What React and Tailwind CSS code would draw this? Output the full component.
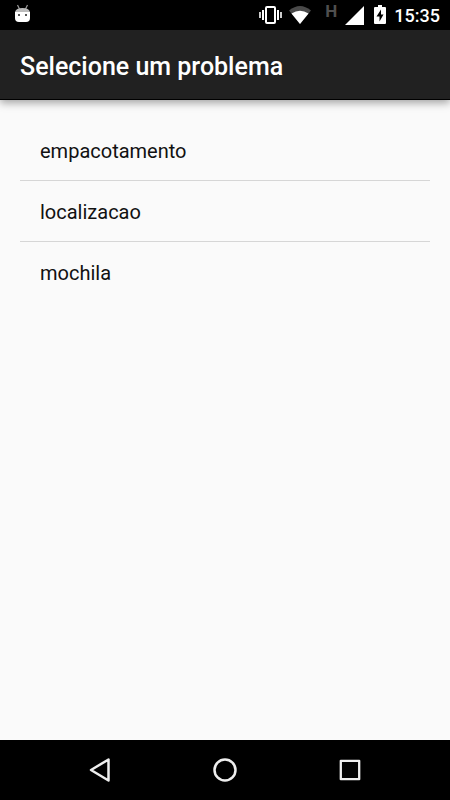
import { useState } from "react"

const problems = [ "empacotamento", "localizacao", "mochila" ]

function StatusBar() {
    return (
        <div className="flex h-[30px] items-center justify-between bg-black pl-[14px] pr-[10px] text-white">
            {/* debug robot */}
            <svg className="h-[30px] w-[17px]" viewBox="0 0 17 30">
                <path d="M3.5 5 5.5 9M13.5 5 11.500 9" stroke="#999" strokeWidth="1.2" />
                <path d="M1 12Q2 8 8.500 8Q15 8 16 12Z" fill="#bbb" />
                <path d="M1 12H16V18Q16 22 12 22H5Q1 22 1 18Z" fill="#fff" />
                <path d="M4 14h2v2H4zM11 14h2v2h-2z" fill="#555" />
            </svg>
            <div className="flex items-center gap-2">
                <div className="flex items-center gap-[6px]">
                    <svg className="h-[30px] w-[24px]" viewBox="0 0 24 30" fill="none" stroke="#fff">
                        <rect x="7" y="7" width="9" height="16" rx="1" strokeWidth="2" />
                        <path d="M4 10v10M19 10v10" strokeWidth="2" />
                        <path d="M1 12v6M22 12v6" strokeWidth="2" stroke="#ccc" />
                    </svg>
                    <svg className="h-[30px] w-[22px]" viewBox="0 0 22 30">
                        <path d="M0 10.500Q11 1.500 22 10.500L11 24Z" fill="#4a4a4a" />
                        <path d="M2.500 13.500Q11 8 19.500 13.500L11 24Z" fill="#fff" />
                    </svg>
                    <span className="h-[30px] w-[20px] text-right text-[17px] leading-[22px] font-bold text-[#4f4f4f]">H</span>
                </div>
                <svg className="h-[30px] w-[20px]" viewBox="0 0 20 30">
                    <path d="M0 25 19 6V25Z" fill="#fff" />
                </svg>
                <svg className="h-[30px] w-[13px]" viewBox="0 0 13 30">
                    <path d="M5 5H9V7H12Q13 7 13 8V23Q13 24 12 24H2Q1 24 1 23V8Q1 7 2 7H5Z" fill="#fff" />
                    <path d="M8 9.500 3.500 16.500H6.500V21.500L10.500 14.500H8Z" fill="#000" />
                </svg>
                <span className="pt-[2px] text-[18px] leading-[28px] font-medium">15:35</span>
            </div>
        </div>
    )
}

function NavBar() {
    return (
        <nav className="flex h-[60px] justify-center bg-black">
            <button aria-label="Voltar" className="flex w-[125px] items-center justify-center">
                <svg className="size-[30px]" viewBox="0 0 30 30" fill="none" stroke="#eee" strokeWidth="2.5" strokeLinejoin="round">
                    <path d="M6 15 23.500 4.500V25.500Z" />
                </svg>
            </button>
            <button aria-label="Início" className="flex w-[125px] items-center justify-center">
                <svg className="size-[30px]" viewBox="0 0 30 30" fill="none" stroke="#eee" strokeWidth="2.5">
                    <circle cx="15" cy="15" r="10.5" />
                </svg>
            </button>
            <button aria-label="Recentes" className="flex w-[125px] items-center justify-center">
                <svg className="size-[30px]" viewBox="0 0 30 30" fill="none" stroke="#eee" strokeWidth="2.3" strokeLinejoin="round">
                    <rect x="5.8" y="5.8" width="18.4" height="18.4" />
                </svg>
            </button>
        </nav>
    )
}

export default function App() {
    const [ selected, setSelected ] = useState(null)

    return (
        <div className="flex min-h-screen flex-col bg-[#fafafa] font-['Roboto',sans-serif]">
            <StatusBar />
            <header className="flex h-[70px] items-center border-b border-black bg-[#212121] px-5 pt-1 shadow-[0_3px_8px_rgba(0,0,0,0.35)]">
                <h1 className="text-[25px] leading-[30px] font-medium text-white">Selecione um problema</h1>
            </header>
            <main className="flex-1 p-5">
                <ul className="divide-y divide-[#d6d6d6]">
                    {problems.map((problem) => (
                        <li key={problem}>
                            <button
                                className="block h-[60px] w-full px-5 pt-[2px] text-left text-[20px] text-[#111]"
                                aria-pressed={selected === problem}
                                onClick={() => setSelected(problem)}
                            >
                                {problem}
                            </button>
                        </li>
                    ))}
                </ul>
            </main>
            <NavBar />
        </div>
    )
}
